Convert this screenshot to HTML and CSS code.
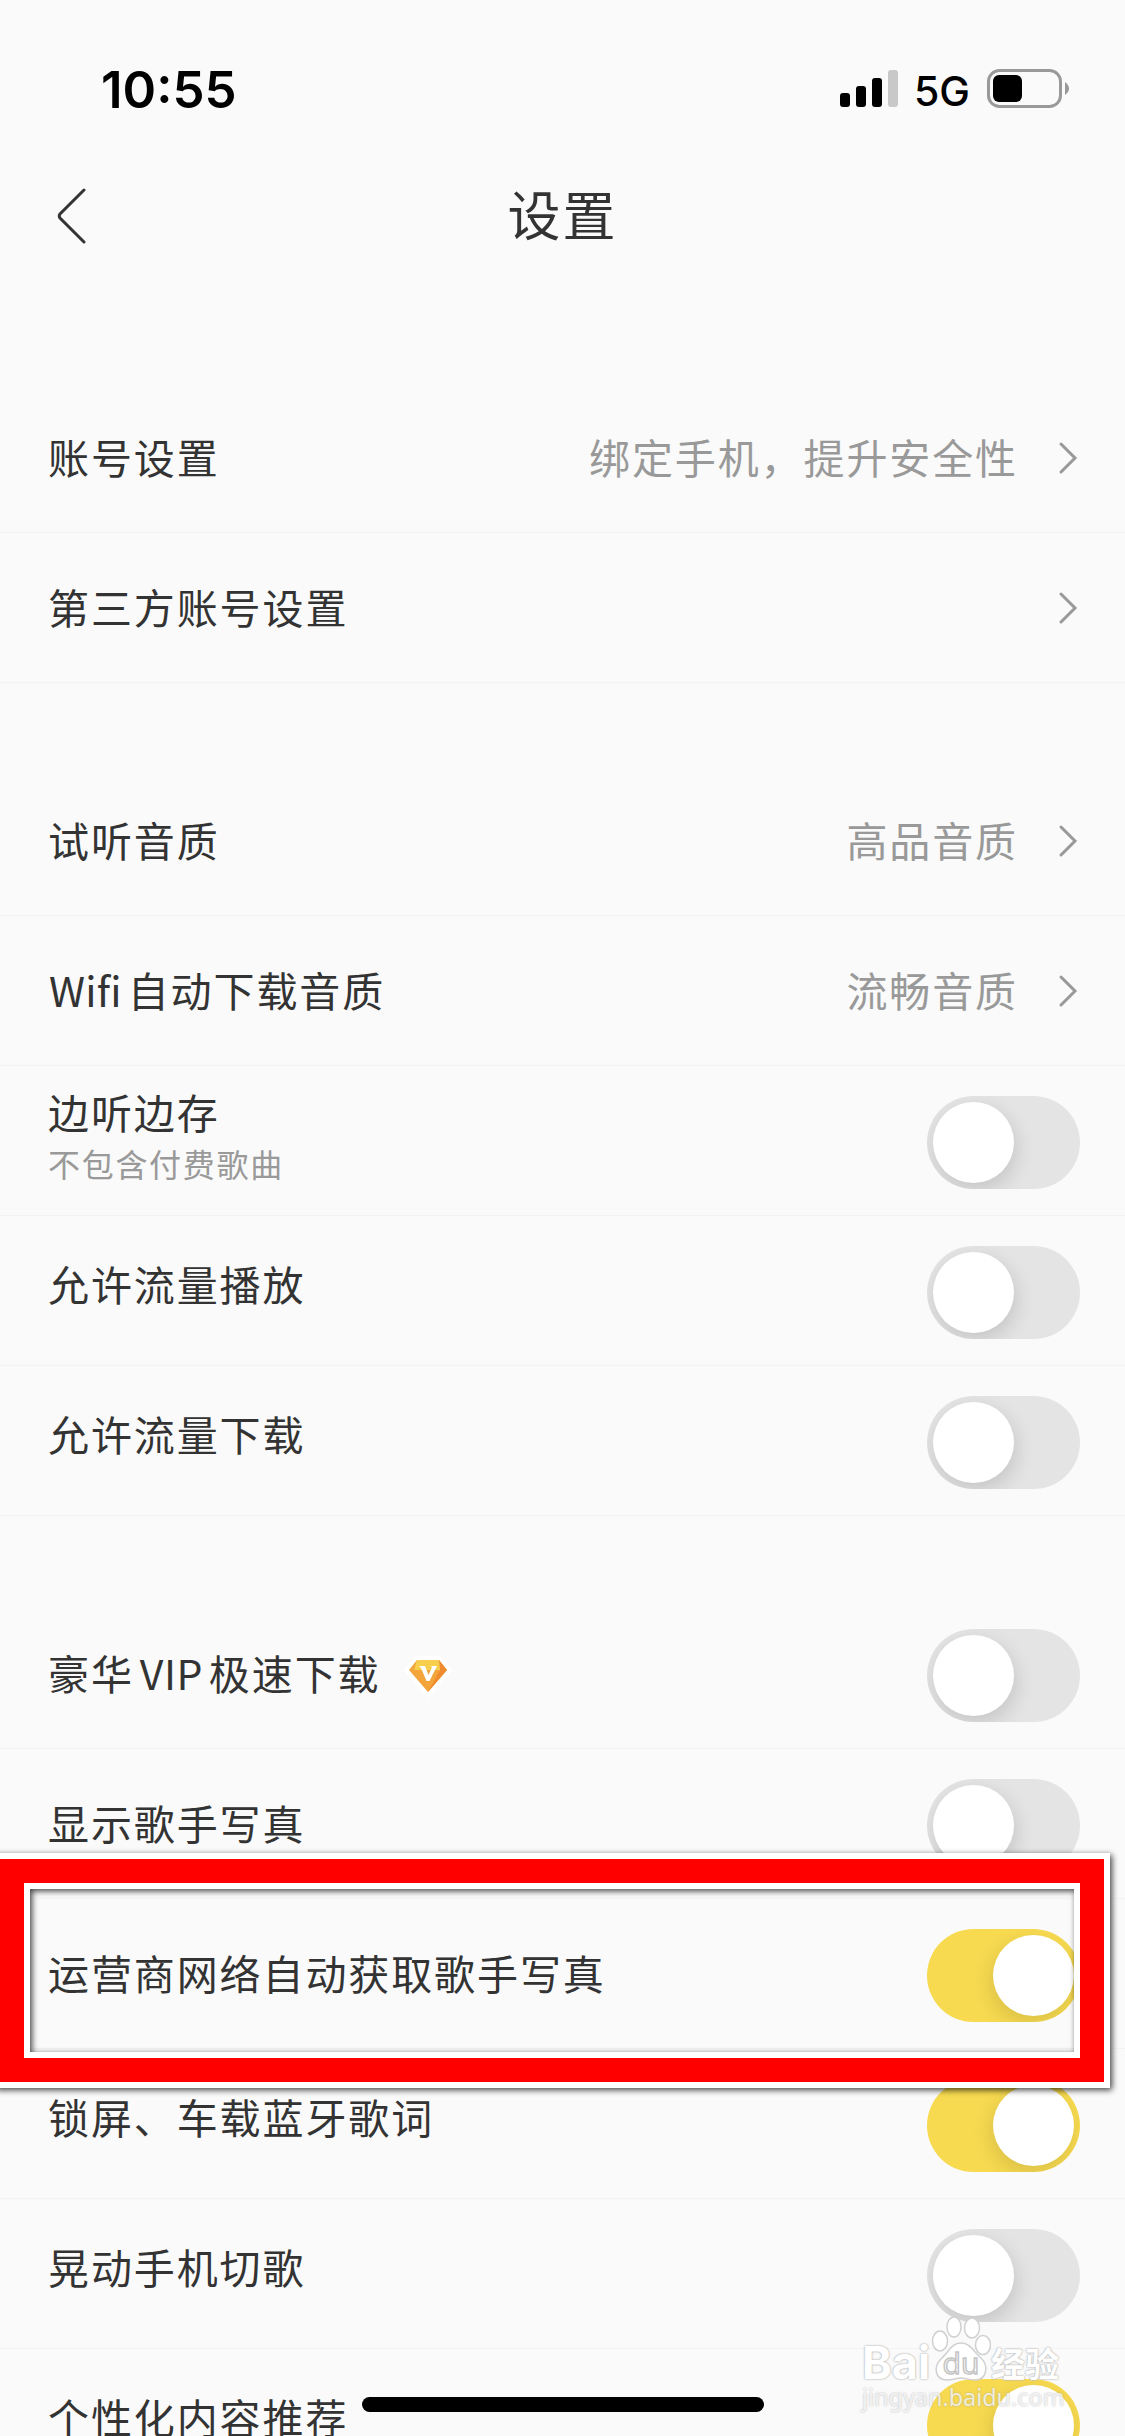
FILE: index.html
```
<!DOCTYPE html>
<html lang="zh-CN">
<head>
    <meta charset="UTF-8">
    <meta name="viewport" content="width=device-width, initial-scale=1.0">
    <title>设置</title>
    <link rel="stylesheet" href="styles.css">
</head>
<body>
    <div class="phone">
        <!-- Status bar -->
        <div class="status-bar">
            <span class="time">10:55</span>
            <div class="status-icons">
                <div class="signal">
                    <i class="bar bar1"></i>
                    <i class="bar bar2"></i>
                    <i class="bar bar3"></i>
                    <i class="bar bar4"></i>
                </div>
                <span class="network">5G</span>
                <svg class="battery" width="83" height="39" viewBox="0 0 83 39">
                    <rect x="1.5" y="1.5" width="72" height="36" rx="11" fill="none" stroke="#999" stroke-width="3"/>
                    <rect x="6" y="6" width="29" height="27" rx="6" fill="#000"/>
                    <path d="M78 13 Q82 16 82 19.500 Q82 23 78 26 Z" fill="#999"/>
                </svg>
            </div>
        </div>

        <!-- Title bar -->
        <div class="nav">
            <svg class="back" width="30" height="58" viewBox="0 0 30 58">
                <path d="M28 3 L4 27 Q2.500 29 4 31 L28 55" fill="none" stroke="#333" stroke-width="3" stroke-linecap="round"/>
            </svg>
            <h1>设置</h1>
        </div>

        <div class="group">
            <div class="row">
                <span class="label">账号设置</span>
                <span class="value">绑定手机，提升安全性</span>
                <svg class="arrow" width="20" height="34" viewBox="0 0 20 34"><path d="M3 3 L17 17 L3 31"/></svg>
            </div>
            <div class="row">
                <span class="label">第三方账号设置</span>
                <svg class="arrow" width="20" height="34" viewBox="0 0 20 34"><path d="M3 3 L17 17 L3 31"/></svg>
            </div>
        </div>

        <div class="group">
            <div class="row">
                <span class="label">试听音质</span>
                <span class="value">高品音质</span>
                <svg class="arrow" width="20" height="34" viewBox="0 0 20 34"><path d="M3 3 L17 17 L3 31"/></svg>
            </div>
            <div class="row">
                <span class="label"><span class="latin">Wifi</span>自动下载音质</span>
                <span class="value">流畅音质</span>
                <svg class="arrow" width="20" height="34" viewBox="0 0 20 34"><path d="M3 3 L17 17 L3 31"/></svg>
            </div>
            <div class="row">
                <div class="label two-line">
                    <span>边听边存</span>
                    <small>不包含付费歌曲</small>
                </div>
                <div class="switch"></div>
            </div>
            <div class="row raised">
                <span class="label">允许流量播放</span>
                <div class="switch"></div>
            </div>
            <div class="row raised">
                <span class="label">允许流量下载</span>
                <div class="switch"></div>
            </div>
        </div>

        <div class="group">
            <div class="row">
                <span class="label">豪华<span class="latin vip">VIP</span>极速下载</span>
                <svg class="diamond" width="52" height="44" viewBox="0 0 52 44">
                    <path d="M14 1 H38 L51 15 L26 43 L1 15 Z" fill="#fff"/>
                    <path d="M15 5 H37 L45 15 L26 37 L7 15 Z" fill="#f3a43a"/>
                    <path d="M15 5 H37 L40 15 H12 Z" fill="#f8cf4d"/>
                    <path d="M37 5 L45 15 L26 37 L38 15 Z" fill="#ee8c2f"/>
                    <path d="M17 11 H23 L26.500 20 L30 12.500 L29 11 H35 L27.500 26 H24.500 L19 13 Z" fill="#fff"/>
                </svg>
                <div class="switch"></div>
            </div>
            <div class="row">
                <span class="label">显示歌手写真</span>
                <div class="switch"></div>
            </div>
            <div class="row">
                <span class="label">运营商网络自动获取歌手写真</span>
                <div class="switch on"></div>
            </div>
            <div class="row raised">
                <span class="label">锁屏、车载蓝牙歌词</span>
                <div class="switch on"></div>
            </div>
            <div class="row raised">
                <span class="label">晃动手机切歌</span>
                <div class="switch"></div>
            </div>
            <div class="row raised">
                <span class="label">个性化内容推荐</span>
                <div class="switch on"></div>
            </div>
        </div>

        <!-- Red frame over the highlighted row -->
        <div class="highlight"></div>

        <div class="home-indicator"></div>

        <!-- Watermark -->
        <div class="watermark">
            <div class="brand">
                <span class="bai">Bai</span>
                <svg class="paw" width="60" height="66" viewBox="0 0 60 66">
                    <g fill="#fff" stroke="#d0d0d0" stroke-width="1.5">
                        <ellipse cx="9" cy="25" rx="7.500" ry="10"/>
                        <ellipse cx="23" cy="11" rx="7" ry="10"/>
                        <ellipse cx="41" cy="12" rx="7.500" ry="10"/>
                        <ellipse cx="52" cy="29" rx="7.500" ry="9.500"/>
                        <path d="M30 27 C39 27 42 35 50 42 C58 50 56 64 44 64 C37 64 35 62 30 62 C25 62 22 64 16 64 C4 64 2 51 10 43 C18 36 20 27 30 27 Z"/>
                    </g>
                    <text class="du" x="30" y="58" text-anchor="middle">du</text>
                </svg>
                <span class="jingyan">经验</span>
            </div>
            <div class="url">jingyan.baidu.com</div>
        </div>
    </div>
</body>
</html>
```

FILE: styles.css
```
/* Base */
*,
*::before,
*::after {
    box-sizing: border-box;
}

body {
    margin: 0;
    background-color: #fafafa;
    color: #333;
    font-family: "Noto Sans CJK SC", sans-serif;
}

.phone {
    position: relative;
    width: 1125px;
    height: 2436px;
    overflow: hidden;
    background-color: #fafafa;
}

/* Status bar */
.status-bar {
    display: flex;
    justify-content: space-between;
    height: 132px;
    padding: 69px 55px 0 101px;
    color: #000;
    font-family: Inter, sans-serif;
}

.time {
    font-size: 51px;
    font-weight: 600;
    line-height: 42px;
}

.status-icons {
    display: flex;
    align-items: flex-start;
}

.signal {
    display: flex;
    align-items: flex-end;
    gap: 6px;
    height: 38px;
    margin-right: 16px;
}

.bar {
    width: 10px;
    border-radius: 3px;
    background-color: #000;
}

.bar1 {
    height: 14px;
}

.bar2 {
    height: 21px;
}

.bar3 {
    height: 29px;
}

.bar4 {
    height: 37px;
    background-color: #c8c8c8;
}

.network {
    width: 73px;
    font-size: 41px;
    font-weight: 500;
    line-height: 44px;
}

/* Title bar */
.nav {
    display: flex;
    align-items: center;
    height: 168px;
    padding: 0 56px;
}

.nav h1 {
    flex: 1;
    margin: 0 30px 6px 0;
    font-size: 53px;
    font-weight: 400;
    letter-spacing: 2px;
    line-height: 60px;
    text-align: center;
}

/* Setting rows */
.group {
    padding-top: 83px;
}

.row {
    display: flex;
    align-items: center;
    height: 150px;
    padding: 3px 45px 0 48px;
    border-bottom: 1px solid #f3f3f3;
}

.label {
    padding-bottom: 6px;
    font-size: 41px;
    letter-spacing: 1.9px;
    line-height: 60px;
    white-space: nowrap;
}

.raised .label {
    padding-bottom: 18px;
}

.latin {
    margin-right: 6px;
    margin-left: 1px;
    letter-spacing: 0.2px;
}

.vip {
    margin-right: 6px;
    margin-left: 6px;
    letter-spacing: 0.5px;
}

.two-line {
    display: flex;
    flex-direction: column;
    padding-bottom: 18px;
}

.two-line small {
    color: #999;
    font-size: 32px;
    letter-spacing: 1.7px;
    line-height: 44px;
}

.value {
    margin-left: auto;
    padding-bottom: 6px;
    color: #999;
    font-size: 41px;
    letter-spacing: 1.9px;
}

.arrow {
    margin-right: 2px;
    margin-bottom: 2px;
    margin-left: 40px;
    fill: none;
    stroke: #999;
    stroke-width: 3;
    stroke-linecap: round;
}

.label + .arrow {
    margin-left: auto;
}

.diamond {
    margin-top: 3px;
    margin-left: 22px;
}

/* Switches */
.switch {
    width: 153px;
    height: 93px;
    margin-left: auto;
    padding: 6px;
    overflow: hidden;
    border-radius: 47px;
    background-color: #e4e4e4;
}

.switch::before {
    content: "";
    display: block;
    width: 81px;
    height: 81px;
    border-radius: 50%;
    background-color: #fff;
    box-shadow: 2px 7px 20px rgba(0, 0, 0, 0.14);
}

.switch.on {
    background-color: #f7da50;
}

.switch.on::before {
    margin-left: 60px;
    box-shadow: -2px 7px 20px rgba(0, 0, 0, 0.12);
}

/* Overlays */
.highlight {
    position: absolute;
    top: 1853px;
    left: -6px;
    width: 1116px;
    height: 235px;
    border: 6px solid #fff;
    filter: drop-shadow(2px 2px 3px rgba(0, 0, 0, 0.75));
}

.highlight::before {
    content: "";
    display: block;
    height: 100%;
    border: 24px solid #f00;
}

.highlight::after {
    content: "";
    position: absolute;
    top: 24px;
    right: 24px;
    bottom: 24px;
    left: 24px;
    border: 6px solid #fff;
}

.home-indicator {
    position: absolute;
    bottom: 24px;
    left: 362px;
    width: 402px;
    height: 15px;
    border-radius: 8px;
    background-color: #000;
}

/* Watermark */
.watermark {
    position: absolute;
    top: 2316px;
    left: 862px;
    color: #fff;
    text-shadow: 0 0 2px #aaa, 0 0 2px #ccc;
}

.brand {
    display: flex;
    align-items: flex-end;
    height: 66px;
}

.bai {
    width: 69px;
    font-family: Inter, sans-serif;
    font-size: 45px;
    font-weight: 700;
    line-height: 38px;
}

.du {
    fill: #fff;
    stroke: #c4c4c4;
    stroke-width: 1.5;
    font-family: "Open Sans", sans-serif;
    font-size: 30px;
    text-shadow: none;
}

.jingyan {
    font-size: 34px;
    font-weight: 700;
    line-height: 38px;
}

.url {
    margin-top: 1px;
    color: rgba(255, 255, 255, 0.75);
    font-family: "Noto Sans", sans-serif;
    font-size: 23.4px;
    line-height: 28px;
    text-shadow: 0 0 2px rgba(150, 150, 150, 0.7);
}
```
